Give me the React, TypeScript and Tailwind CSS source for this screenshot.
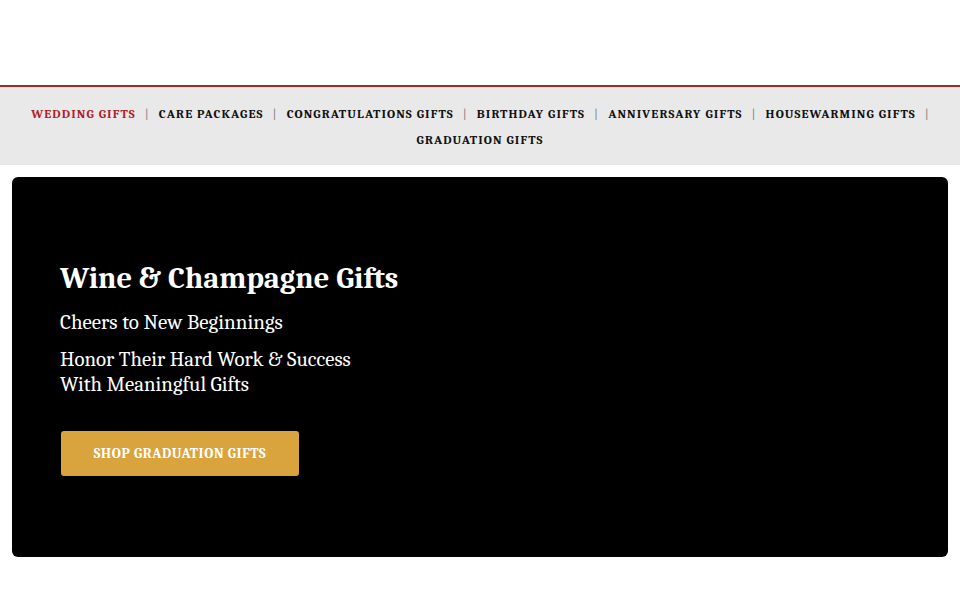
import React from "react";

const items = [
  "Wedding Gifts",
  "Care Packages",
  "Congratulations Gifts",
  "Birthday Gifts",
  "Anniversary Gifts",
  "Housewarming Gifts",
  "Graduation Gifts",
];

export default function App() {
  const serif = { fontFamily: 'Cambria, "Liberation Serif", "DejaVu Serif", serif' };
  return (
    <div className="w-[960px] h-[600px] bg-white overflow-hidden" style={serif}>
      <div className="h-[85px]" />
      <div className="h-[2px] bg-[#a5282c]" />
      <nav className="bg-[#e9e9e9] h-[78px] px-[20px] pt-[14px]">
        <ul className="flex flex-wrap justify-center text-[12.5px] font-bold uppercase tracking-[1.1px] leading-[26px] text-[#111]">
          {items.map((t, i) => (
            <li key={t} className="flex items-center">
              <span className={i === 0 ? "text-[#b3202a]" : ""}>{t}</span>
              {i < items.length - 1 && (
                <span
                  className={
                    i === items.length - 2
                      ? "ml-[9px] mr-[-1px] font-normal text-[#777]"
                      : "mx-[9px] font-normal text-[#777]"
                  }
                >
                  |
                </span>
              )}
            </li>
          ))}
        </ul>
      </nav>
      <div className="px-[12px] pt-[12px]">
        <div className="bg-black rounded-[6px] h-[380px] pl-[48px] pt-[83px] text-white">
          <h1 className="text-[30.5px] font-bold leading-[38px]">Wine &amp; Champagne Gifts</h1>
          <p className="text-[21px] leading-[25px] mt-[12px]">Cheers to New Beginnings</p>
          <p className="text-[20.8px] leading-[25px] mt-[12px] w-[320px]">
            Honor Their Hard Work &amp; Success With Meaningful Gifts
          </p>
          <button className="mt-[34px] ml-[1px] w-[238px] h-[45px] bg-[#d9a43e] rounded-[3px] text-white text-[14px] font-bold uppercase tracking-[0.6px]">
            Shop Graduation Gifts
          </button>
        </div>
      </div>
    </div>
  );
}
